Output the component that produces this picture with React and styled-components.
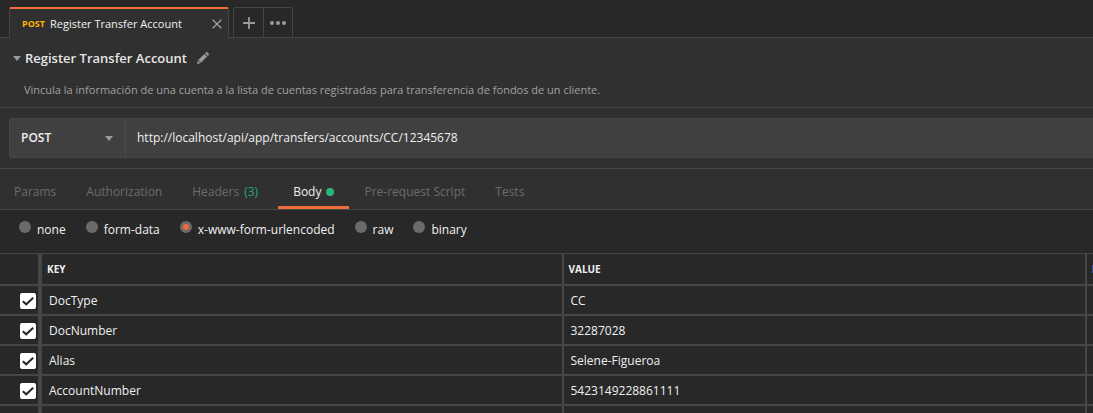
import React, { useState } from "react";
import styled, { createGlobalStyle } from "styled-components";

const GlobalStyle = createGlobalStyle`
  *, *::before, *::after { box-sizing: border-box; }
  body {
    margin: 0;
    background: #282828;
    color: #f0f0f0;
    font: 400 12px/18px "Open Sans", "Noto Sans", sans-serif;
  }
  button, input, select { font: inherit; color: inherit; margin: 0; padding: 0; }
  button { background: none; border: 0; cursor: pointer; }
  svg { display: block; }
`;

const line = "#464646";

const Page = styled.main`
  display: flex;
  flex-direction: column;
  height: 100vh;
  & > * { flex-shrink: 0; }
`;

const TabBar = styled.div`
  display: flex;
  align-items: flex-end;
  gap: 4px;
  height: 38px;
  padding: 0 9px;
  border-bottom: 1px solid ${line};
`;

const RequestTab = styled.div`
  display: flex;
  align-items: center;
  width: 220px;
  height: 31px;
  margin-bottom: -1px;
  padding: 0 6px 0 12px;
  background: #303030;
  border: 1px solid ${line};
  border-top: 2px solid #f26b3a;
  border-bottom: 0;
  border-radius: 2px 2px 0 0;
`;

const TabMethod = styled.span`
  width: 28px;
  color: #ffb400;
  font-size: 9px;
  font-weight: 700;
`;

const TabTitle = styled.span`
  flex: 1;
  font-size: 11px;
  white-space: nowrap;
`;

const TabActions = styled.div`
  display: flex;
  height: 30px;
  border: 1px solid ${line};
  border-bottom: 0;
  border-radius: 3px 3px 0 0;
`;

const IconButton = styled.button`
  display: grid;
  place-items: center;
  width: ${(p) => p.$width || "auto"};
  color: #9a9a9a;
  & + & { border-left: 1px solid ${line}; }
`;

const RequestInfo = styled.header`
  height: 70px;
  padding: 10px 13px 0;
  background: #303030;
  border-bottom: 1px solid ${line};
`;

const TitleRow = styled.div`
  display: flex;
  align-items: center;
  gap: 4px;
  height: 20px;
`;

const Title = styled.h1`
  margin: 0 6px 0 0;
  font-size: 13px;
  line-height: 20px;
  font-weight: 600;
  color: #e6e6e6;
`;

const Description = styled.p`
  margin: 13px 0 0 11px;
  font-size: 11px;
  color: #a0a0a0;
`;

const UrlSection = styled.div`
  height: 61px;
  padding: 10px 0 10px 9px;
  background: #303030;
  border-bottom: 1px solid ${line};
`;

const UrlBar = styled.div`
  display: flex;
  height: 40px;
  background: #404040;
  border: 1px solid ${line};
  border-right: 0;
  border-radius: 3px 0 0 3px;
`;

const MethodField = styled.label`
  display: grid;
  grid-template-columns: 1fr 8px;
  align-items: center;
  width: 116px;
  padding-right: 12px;
  border-right: 1px solid #4a4a4a;
  color: #9a9a9a;
  svg { grid-area: 1 / 2; pointer-events: none; }
`;

const MethodSelect = styled.select`
  grid-area: 1 / 1 / 2 / 3;
  appearance: none;
  height: 38px;
  padding-left: 11px;
  border: 0;
  outline: 0;
  background: transparent;
  color: #f0f0f0;
  font-weight: 600;
`;

const UrlInput = styled.input`
  flex: 1;
  min-width: 0;
  padding: 0 11px;
  border: 0;
  outline: 0;
  background: transparent;
`;

const Sections = styled.nav`
  display: flex;
  height: 41px;
  padding-top: 8px;
  background: #303030;
  border-bottom: 1px solid ${line};
`;

const SectionTab = styled.button`
  display: flex;
  align-items: center;
  gap: ${(p) => p.$gap || "5px"};
  padding: 0 15px;
  border-bottom: 3px solid ${(p) => (p.$active ? "#f26b3a" : "transparent")};
  color: ${(p) => (p.$active ? "#f0f0f0" : "#6c6c6c")};
  &:first-child { padding-left: 14px; }
`;

const Count = styled.span`
  padding-right: 5px;
  color: #26a67a;
`;

const Dot = styled.span`
  width: 8px;
  height: 8px;
  border-radius: 50%;
  background: #26b47f;
`;

const BodyTypes = styled.div`
  display: flex;
  gap: 20px;
  height: 44px;
  padding: 11px 19px 0;
  border-bottom: 1px solid ${line};
`;

const RadioLabel = styled.label`
  display: flex;
  gap: 6px;
  height: 18px;
  white-space: nowrap;
`;

const Radio = styled.input`
  appearance: none;
  width: 12px;
  height: 12px;
  border-radius: 50%;
  background: #6b6b6b;
  &:checked {
    border: 3px solid #6b6b6b;
    background: #f26b3a;
  }
`;

const TableArea = styled.div`
  flex: 1 1 0;
  min-height: 0;
  overflow: hidden;
`;

const ParamTable = styled.table`
  width: calc(150% - 31px);
  table-layout: fixed;
  border-collapse: separate;
  border-spacing: 0;
`;

const Cell = styled.td`
  height: 30px;
  padding: 2px 7px 0;
  border-left: 2px solid ${line};
  border-bottom: 2px solid ${line};
  text-align: left;
  &:first-child { width: 38px; padding: 2px 2px 0 20px; border-left: 0; }
  &:nth-child(2) { border-left-width: 4px; }
`;

const HeadCell = styled(Cell)`
  height: 32px;
  padding: 0 5px;
  font-size: 10px;
  font-weight: 700;
`;

const CheckLabel = styled.label`
  display: grid;
  width: 16px;
  height: 16px;
  color: #282828;
  svg { grid-area: 1 / 1; pointer-events: none; visibility: hidden; }
  input:checked + svg { visibility: visible; }
`;

const Checkbox = styled.input`
  grid-area: 1 / 1;
  appearance: none;
  width: 16px;
  height: 16px;
  border-radius: 2px;
  background: #ffffff;
`;

const Caret = () => (
  <svg width="8" height="5" viewBox="0 0 8 5" aria-hidden="true">
    <path d="M0 0h8L4 5z" fill="currentColor" />
  </svg>
);

const CloseIcon = () => (
  <svg width="10" height="10" viewBox="0 0 10 10" aria-hidden="true">
    <path d="M.7.7l8.6 8.6M9.3.7L.7 9.3" stroke="currentColor" strokeWidth="1.4" />
  </svg>
);

const PlusIcon = () => (
  <svg width="12" height="12" viewBox="0 0 12 12" aria-hidden="true">
    <path d="M6 0v12M0 6h12" stroke="currentColor" strokeWidth="1.8" />
  </svg>
);

const DotsIcon = () => (
  <svg width="16" height="4" viewBox="0 0 16 4" fill="currentColor" aria-hidden="true">
    <circle cx="2" cy="2" r="2" />
    <circle cx="8" cy="2" r="2" />
    <circle cx="14" cy="2" r="2" />
  </svg>
);

const PencilIcon = () => (
  <svg width="12" height="12" viewBox="0 0 12 12" fill="currentColor" aria-hidden="true">
    <path d="M0 12l.8-3.4 2.6 2.6zM1.2 8.1L7.4 1.9l2.7 2.7-6.200 6.200zM8.1 1.200L9 .3q.6-.5 1.200 0L11.700 1.800q.5.6 0 1.200l-.9.9z" />
  </svg>
);

const CheckIcon = () => (
  <svg width="16" height="16" viewBox="0 0 16 16" aria-hidden="true">
    <path d="M2.8 8.2l3.4 3.1 7-6.6" fill="none" stroke="currentColor" strokeWidth="2" />
  </svg>
);

const bodyTypes = ["none", "form-data", "x-www-form-urlencoded", "raw", "binary"];

const params = [
  { key: "DocType", value: "CC" },
  { key: "DocNumber", value: "32287028" },
  { key: "Alias", value: "Selene-Figueroa" },
  { key: "AccountNumber", value: "5423149228861111" },
];

export default function App() {
  const [section, setSection] = useState("Body");
  const sectionProps = (name) => ({
    $active: section === name,
    onClick: () => setSection(name),
  });

  return (
    <Page>
      <GlobalStyle />
      <TabBar>
        <RequestTab>
          <TabMethod>POST</TabMethod>
          <TabTitle>Register Transfer Account</TabTitle>
          <IconButton aria-label="Close tab"><CloseIcon /></IconButton>
        </RequestTab>
        <TabActions>
          <IconButton $width="29px" aria-label="New tab"><PlusIcon /></IconButton>
          <IconButton $width="29px" aria-label="Tab options"><DotsIcon /></IconButton>
        </TabActions>
      </TabBar>
      <RequestInfo>
        <TitleRow>
          <IconButton aria-label="Toggle description"><Caret /></IconButton>
          <Title>Register Transfer Account</Title>
          <IconButton aria-label="Edit name"><PencilIcon /></IconButton>
        </TitleRow>
        <Description>
          Vincula la información de una cuenta a la lista de cuentas registradas para transferencia de fondos de un cliente.
        </Description>
      </RequestInfo>
      <UrlSection>
        <UrlBar>
          <MethodField>
            <MethodSelect aria-label="Method" defaultValue="POST">
              <option>POST</option>
            </MethodSelect>
            <Caret />
          </MethodField>
          <UrlInput
            aria-label="Request URL"
            defaultValue="http://localhost/api/app/transfers/accounts/CC/12345678"
          />
        </UrlBar>
      </UrlSection>
      <Sections>
        <SectionTab {...sectionProps("Params")}>Params</SectionTab>
        <SectionTab {...sectionProps("Authorization")}>Authorization</SectionTab>
        <SectionTab {...sectionProps("Headers")}>Headers <Count>(3)</Count></SectionTab>
        <SectionTab {...sectionProps("Body")}>Body <Dot /></SectionTab>
        <SectionTab {...sectionProps("Pre-request Script")}>Pre-request Script</SectionTab>
        <SectionTab {...sectionProps("Tests")}>Tests</SectionTab>
      </Sections>
      <BodyTypes>
        {bodyTypes.map((type) => (
          <RadioLabel key={type}>
            <Radio type="radio" name="body-type" defaultChecked={type === "x-www-form-urlencoded"} />
            {type}
          </RadioLabel>
        ))}
      </BodyTypes>
      <TableArea>
        <ParamTable>
          <thead>
            <tr>
              <HeadCell />
              <HeadCell as="th">KEY</HeadCell>
              <HeadCell as="th">VALUE</HeadCell>
              <HeadCell as="th">DESCRIPTION</HeadCell>
            </tr>
          </thead>
          <tbody>
            {params.map((param) => (
              <tr key={param.key}>
                <Cell>
                  <CheckLabel>
                    <Checkbox type="checkbox" aria-label={param.key} defaultChecked />
                    <CheckIcon />
                  </CheckLabel>
                </Cell>
                <Cell>{param.key}</Cell>
                <Cell>{param.value}</Cell>
                <Cell />
              </tr>
            ))}
            <tr>
              <Cell /><Cell /><Cell /><Cell />
            </tr>
          </tbody>
        </ParamTable>
      </TableArea>
    </Page>
  );
}
